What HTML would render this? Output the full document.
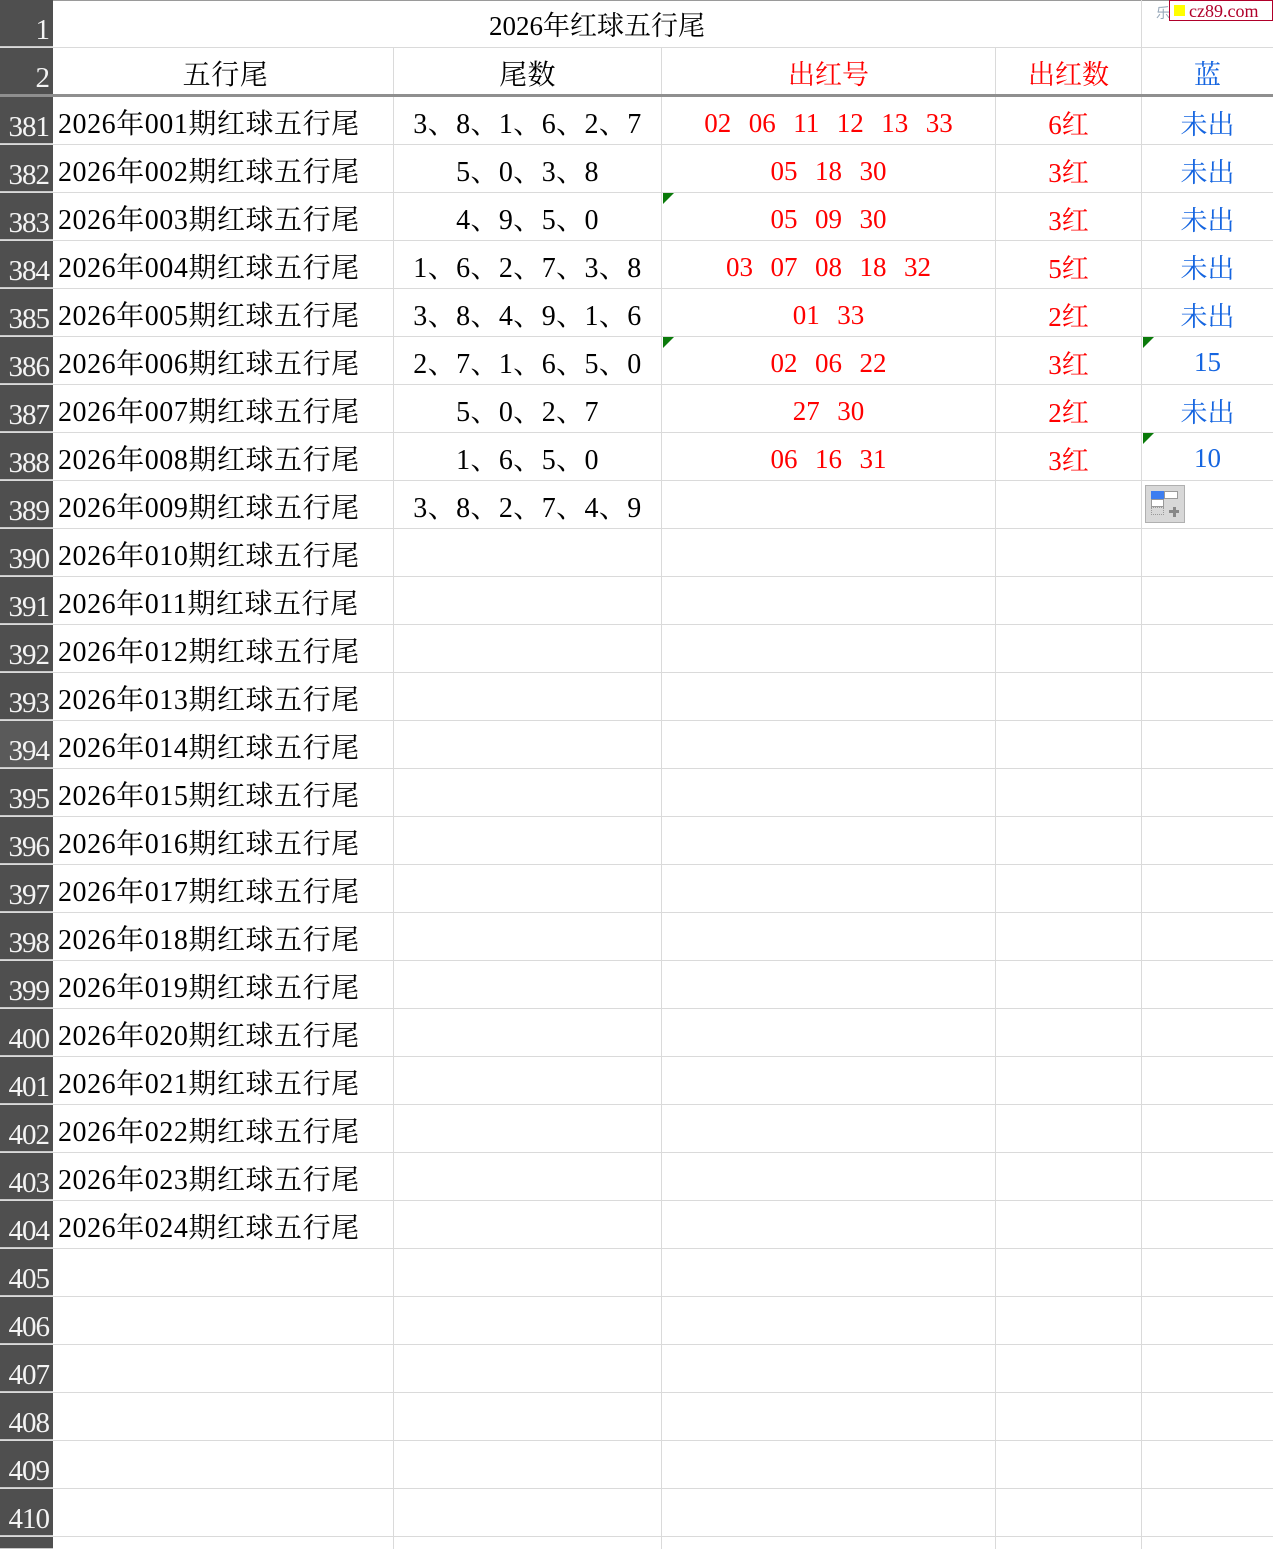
<!DOCTYPE html>
<html><head><meta charset="utf-8">
<style>
*{margin:0;padding:0;box-sizing:border-box}
body{width:1273px;height:1549px;overflow:hidden;background:#fff;position:relative;font-family:"Liberation Serif","Noto Serif CJK SC",serif;}
.r{position:absolute;left:0;width:1273px;height:48px;border-bottom:1px solid #dadada}
.h{position:absolute;left:0;top:0;width:53px;height:100%;background:#4f4f4f;color:#f4f4f4;font-size:29px;text-align:right;padding-right:4px;line-height:1;border-bottom:1px solid #c8c8c8;display:flex;align-items:flex-end;justify-content:flex-end;padding-bottom:1px;letter-spacing:-1px}
.c{position:absolute;top:0;height:100%;border-right:1px solid #dadada;font-size:27px;display:flex;align-items:center;justify-content:center;white-space:pre;padding-top:3px}
.c1{left:53px;width:341px;justify-content:flex-start;padding-left:5px;font-size:28px;letter-spacing:0.55px}
.c2{left:394px;width:268px;font-size:28px;letter-spacing:0.4px}
.c3{left:662px;width:334px;color:#f00;word-spacing:2px;padding-top:5px}
.c4{left:996px;width:146px;color:#f00}
.c5{left:1142px;width:131px;color:#1565e0;border-right:none}
.tri{position:absolute;width:0;height:0;border-top:11px solid #0a7a0a;border-right:11px solid transparent;top:0;left:1px}
</style></head><body>
<div style="position:absolute;left:0;top:0;width:1273px;height:1px;background:#9a9a9a"></div>
<div class="r" style="top:0;height:48px"><div class="h">1</div>
<div class="c" style="left:53px;width:1089px;font-size:27px;padding-top:0">2026年红球五行尾</div>
<div class="c c5"></div></div>
<div class="r" style="top:48px;height:49px;border-bottom:3px solid #8f8f8f"><div class="h" style="border-bottom:none">2</div>
<div class="c c1" style="justify-content:center">五行尾</div><div class="c c2">尾数</div><div class="c c3" style="padding-top:3px">出红号</div><div class="c c4">出红数</div><div class="c c5">蓝</div></div>

<div class="r" style="top:97px"><div class="h">381</div><div class="c c1">2026年001期红球五行尾</div><div class="c c2">3、8、1、6、2、7</div><div class="c c3">02  06  11  12  13  33</div><div class="c c4">6红</div><div class="c c5">未出</div></div>
<div class="r" style="top:145px"><div class="h">382</div><div class="c c1">2026年002期红球五行尾</div><div class="c c2">5、0、3、8</div><div class="c c3">05  18  30</div><div class="c c4">3红</div><div class="c c5">未出</div></div>
<div class="r" style="top:193px"><div class="h">383</div><div class="c c1">2026年003期红球五行尾</div><div class="c c2">4、9、5、0</div><div class="c c3"><span class="tri"></span>05  09  30</div><div class="c c4">3红</div><div class="c c5">未出</div></div>
<div class="r" style="top:241px"><div class="h">384</div><div class="c c1">2026年004期红球五行尾</div><div class="c c2">1、6、2、7、3、8</div><div class="c c3">03  07  08  18  32</div><div class="c c4">5红</div><div class="c c5">未出</div></div>
<div class="r" style="top:289px"><div class="h">385</div><div class="c c1">2026年005期红球五行尾</div><div class="c c2">3、8、4、9、1、6</div><div class="c c3">01  33</div><div class="c c4">2红</div><div class="c c5">未出</div></div>
<div class="r" style="top:337px"><div class="h">386</div><div class="c c1">2026年006期红球五行尾</div><div class="c c2">2、7、1、6、5、0</div><div class="c c3"><span class="tri"></span>02  06  22</div><div class="c c4">3红</div><div class="c c5"><span class="tri"></span>15</div></div>
<div class="r" style="top:385px"><div class="h">387</div><div class="c c1">2026年007期红球五行尾</div><div class="c c2">5、0、2、7</div><div class="c c3">27  30</div><div class="c c4">2红</div><div class="c c5">未出</div></div>
<div class="r" style="top:433px"><div class="h">388</div><div class="c c1">2026年008期红球五行尾</div><div class="c c2">1、6、5、0</div><div class="c c3">06  16  31</div><div class="c c4">3红</div><div class="c c5"><span class="tri"></span>10</div></div>
<div class="r" style="top:481px"><div class="h">389</div><div class="c c1">2026年009期红球五行尾</div><div class="c c2">3、8、2、7、4、9</div><div class="c c3"></div><div class="c c4"></div><div class="c c5"></div></div>
<div class="r" style="top:529px"><div class="h">390</div><div class="c c1">2026年010期红球五行尾</div><div class="c c2"></div><div class="c c3"></div><div class="c c4"></div><div class="c c5"></div></div>
<div class="r" style="top:577px"><div class="h">391</div><div class="c c1">2026年011期红球五行尾</div><div class="c c2"></div><div class="c c3"></div><div class="c c4"></div><div class="c c5"></div></div>
<div class="r" style="top:625px"><div class="h">392</div><div class="c c1">2026年012期红球五行尾</div><div class="c c2"></div><div class="c c3"></div><div class="c c4"></div><div class="c c5"></div></div>
<div class="r" style="top:673px"><div class="h">393</div><div class="c c1">2026年013期红球五行尾</div><div class="c c2"></div><div class="c c3"></div><div class="c c4"></div><div class="c c5"></div></div>
<div class="r" style="top:721px"><div class="h" style="background:#5a5a5a">394</div><div class="c c1">2026年014期红球五行尾</div><div class="c c2"></div><div class="c c3"></div><div class="c c4"></div><div class="c c5"></div></div>
<div class="r" style="top:769px"><div class="h">395</div><div class="c c1">2026年015期红球五行尾</div><div class="c c2"></div><div class="c c3"></div><div class="c c4"></div><div class="c c5"></div></div>
<div class="r" style="top:817px"><div class="h">396</div><div class="c c1">2026年016期红球五行尾</div><div class="c c2"></div><div class="c c3"></div><div class="c c4"></div><div class="c c5"></div></div>
<div class="r" style="top:865px"><div class="h">397</div><div class="c c1">2026年017期红球五行尾</div><div class="c c2"></div><div class="c c3"></div><div class="c c4"></div><div class="c c5"></div></div>
<div class="r" style="top:913px"><div class="h">398</div><div class="c c1">2026年018期红球五行尾</div><div class="c c2"></div><div class="c c3"></div><div class="c c4"></div><div class="c c5"></div></div>
<div class="r" style="top:961px"><div class="h">399</div><div class="c c1">2026年019期红球五行尾</div><div class="c c2"></div><div class="c c3"></div><div class="c c4"></div><div class="c c5"></div></div>
<div class="r" style="top:1009px"><div class="h">400</div><div class="c c1">2026年020期红球五行尾</div><div class="c c2"></div><div class="c c3"></div><div class="c c4"></div><div class="c c5"></div></div>
<div class="r" style="top:1057px"><div class="h">401</div><div class="c c1">2026年021期红球五行尾</div><div class="c c2"></div><div class="c c3"></div><div class="c c4"></div><div class="c c5"></div></div>
<div class="r" style="top:1105px"><div class="h">402</div><div class="c c1">2026年022期红球五行尾</div><div class="c c2"></div><div class="c c3"></div><div class="c c4"></div><div class="c c5"></div></div>
<div class="r" style="top:1153px"><div class="h">403</div><div class="c c1">2026年023期红球五行尾</div><div class="c c2"></div><div class="c c3"></div><div class="c c4"></div><div class="c c5"></div></div>
<div class="r" style="top:1201px"><div class="h">404</div><div class="c c1">2026年024期红球五行尾</div><div class="c c2"></div><div class="c c3"></div><div class="c c4"></div><div class="c c5"></div></div>
<div class="r" style="top:1249px"><div class="h">405</div><div class="c c1"></div><div class="c c2"></div><div class="c c3"></div><div class="c c4"></div><div class="c c5"></div></div>
<div class="r" style="top:1297px"><div class="h">406</div><div class="c c1"></div><div class="c c2"></div><div class="c c3"></div><div class="c c4"></div><div class="c c5"></div></div>
<div class="r" style="top:1345px"><div class="h">407</div><div class="c c1"></div><div class="c c2"></div><div class="c c3"></div><div class="c c4"></div><div class="c c5"></div></div>
<div class="r" style="top:1393px"><div class="h">408</div><div class="c c1"></div><div class="c c2"></div><div class="c c3"></div><div class="c c4"></div><div class="c c5"></div></div>
<div class="r" style="top:1441px"><div class="h">409</div><div class="c c1"></div><div class="c c2"></div><div class="c c3"></div><div class="c c4"></div><div class="c c5"></div></div>
<div class="r" style="top:1489px"><div class="h">410</div><div class="c c1"></div><div class="c c2"></div><div class="c c3"></div><div class="c c4"></div><div class="c c5"></div></div>
<div class="r" style="top:1537px;height:12px;border-bottom:none"><div class="h"></div><div class="c c1"></div><div class="c c2"></div><div class="c c3"></div><div class="c c4"></div><div class="c c5"></div></div>

<div style="position:absolute;left:1145px;top:485px;width:40px;height:38px;background:#d8d8d8;border:1px solid #b0b0b0">
 <div style="position:absolute;left:5px;top:5px;width:13px;height:8px;background:#3d7ef0"></div>
 <div style="position:absolute;left:18px;top:5px;width:14px;height:8px;background:#fff;border:1px solid #999"></div>
 <div style="position:absolute;left:5px;top:13px;width:13px;height:8px;background:#fff;border:1px solid #999"></div>
 <div style="position:absolute;left:5px;top:21px;width:13px;height:8px;border:1px dotted #999"></div>
 <div style="position:absolute;left:23px;top:24px;width:10px;height:3px;background:#888"></div>
 <div style="position:absolute;left:26.5px;top:20.5px;width:3px;height:10px;background:#888"></div>
</div>

<div style="position:absolute;left:1156px;top:3px;font-size:14px;color:#9ab;font-family:'Noto Sans CJK SC',sans-serif">乐</div>
<div style="position:absolute;left:1169px;top:0;width:104px;height:21px;background:#fff;border:1px solid #b0002a;display:flex;align-items:center;padding-left:4px">
 <span style="display:inline-block;width:11px;height:11px;background:#ff0;margin-right:4px"></span>
 <span style="font-size:18px;color:#b0002a;font-family:'Liberation Serif',serif;line-height:1">cz89.com</span>
</div>
</body></html>
